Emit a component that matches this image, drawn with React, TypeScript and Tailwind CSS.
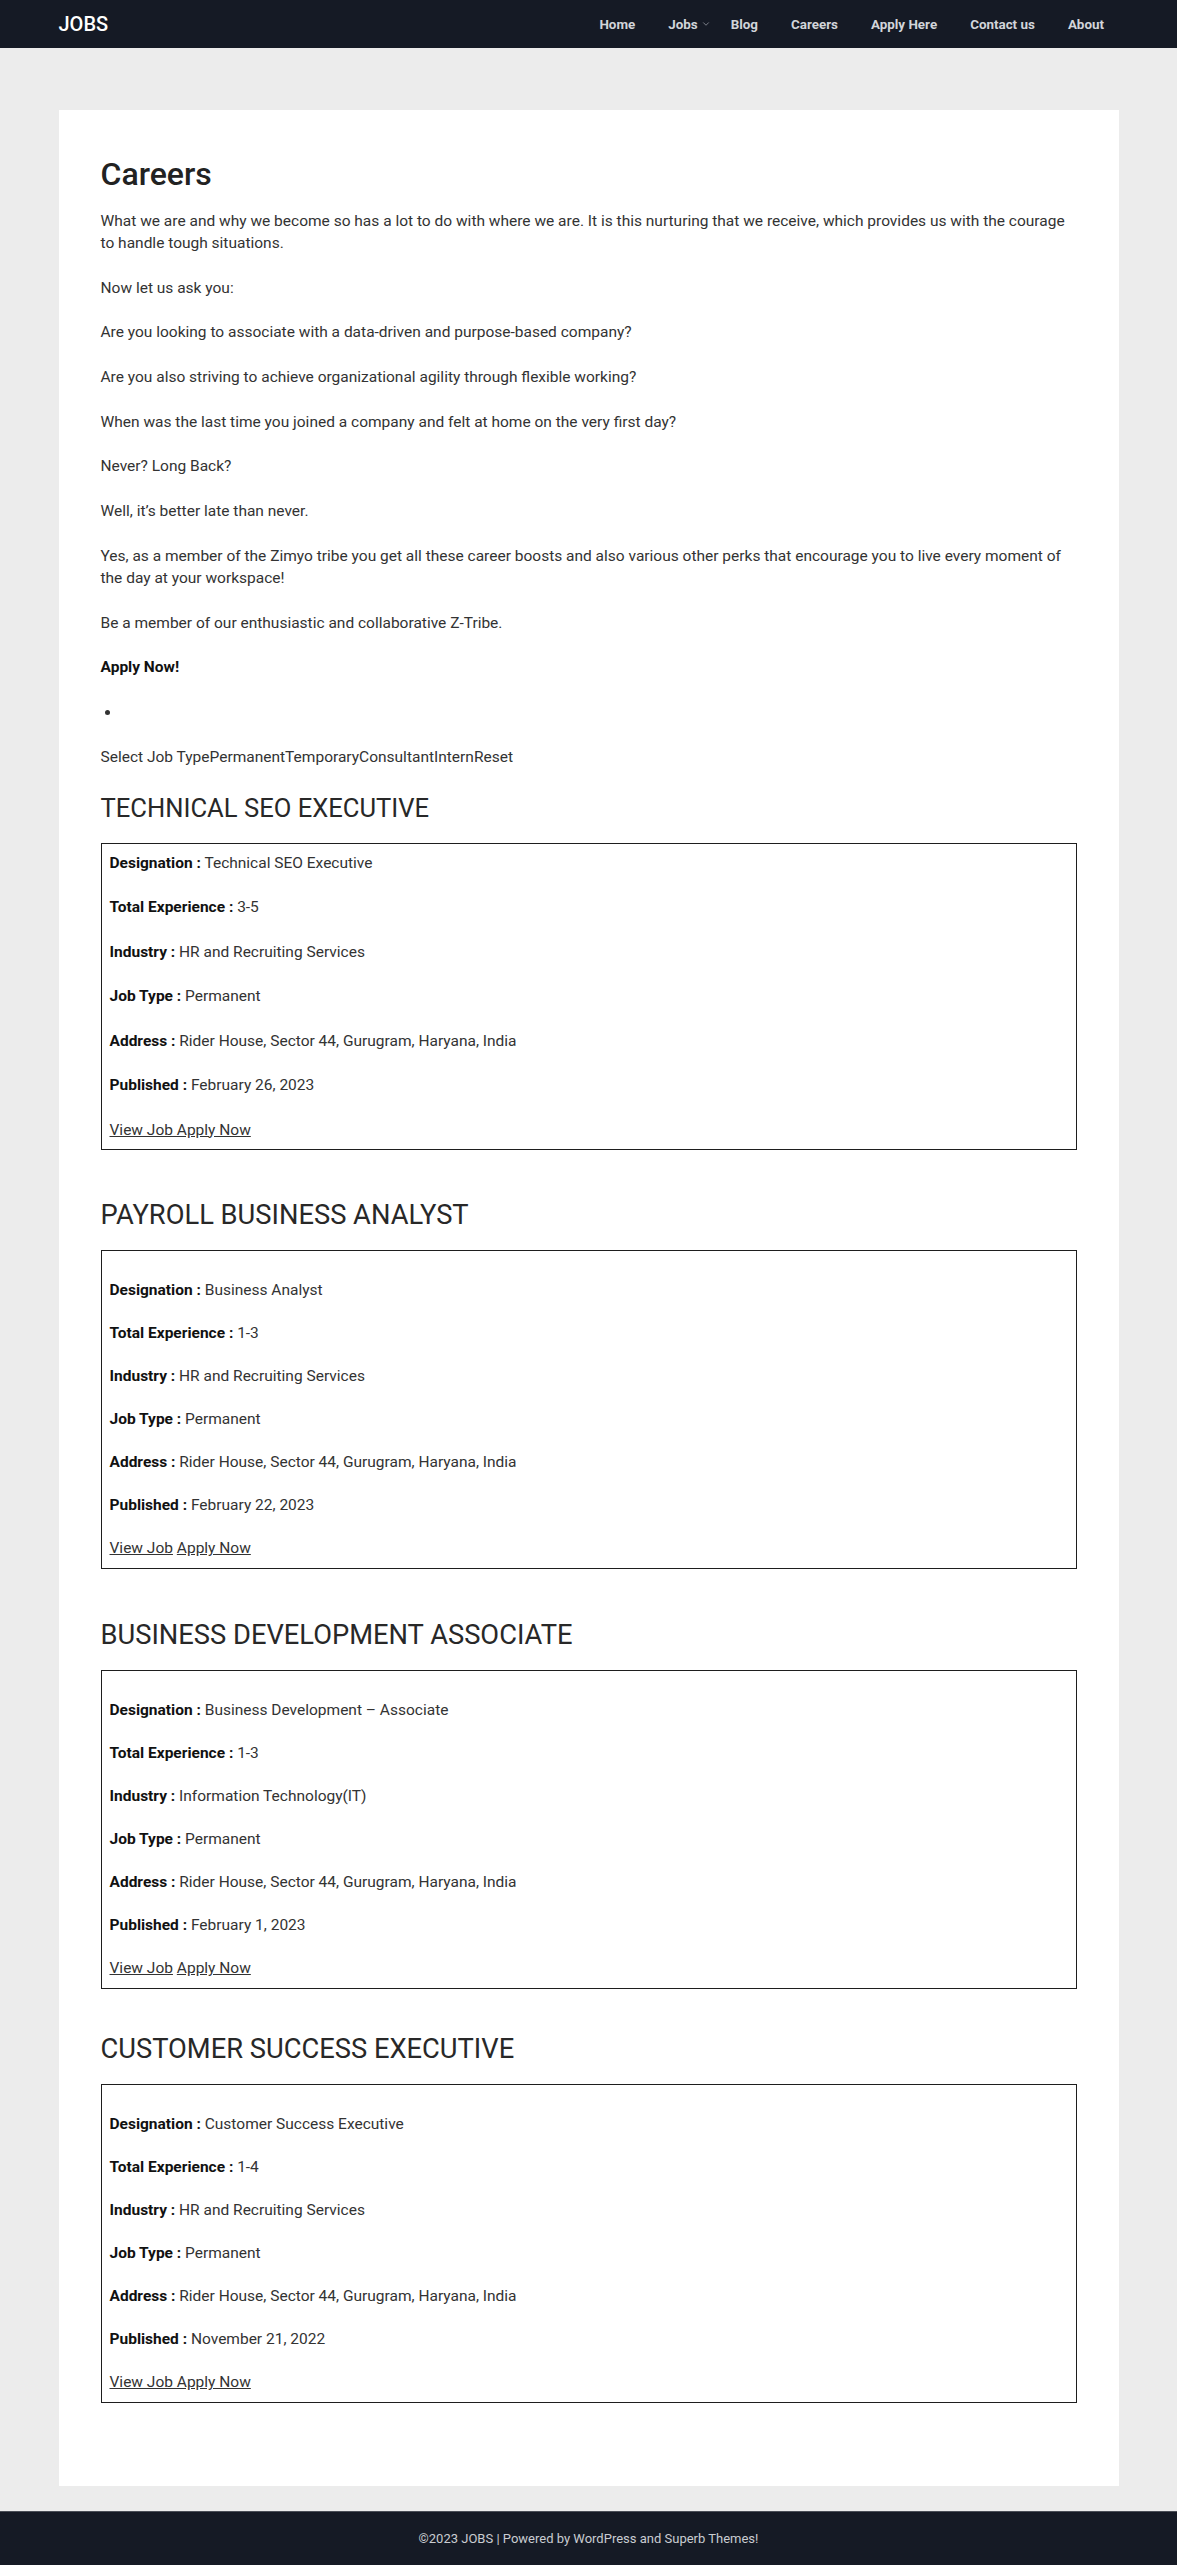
import { ChevronDown } from "lucide-react";

interface Job {
  title: string;
  designation: string;
  experience: string;
  industry: string;
  jobType: string;
  address: string;
  published: string;
  spacedTop: boolean;
  joinedLinks: boolean;
  gapBefore: string;
  titleSize: string;
}

const jobs: Job[] = [
  {
    title: "TECHNICAL SEO EXECUTIVE",
    designation: "Technical SEO Executive",
    experience: "3-5",
    industry: "HR and Recruiting Services",
    jobType: "Permanent",
    address: "Rider House, Sector 44, Gurugram, Haryana, India",
    published: "February 26, 2023",
    spacedTop: false,
    joinedLinks: true,
    gapBefore: "mt-[25px]",
    titleSize: "text-[25.6px]",
  },
  {
    title: "PAYROLL BUSINESS ANALYST",
    designation: "Business Analyst",
    experience: "1-3",
    industry: "HR and Recruiting Services",
    jobType: "Permanent",
    address: "Rider House, Sector 44, Gurugram, Haryana, India",
    published: "February 22, 2023",
    spacedTop: true,
    joinedLinks: false,
    gapBefore: "mt-[50px]",
    titleSize: "text-[27.3px]",
  },
  {
    title: "BUSINESS DEVELOPMENT ASSOCIATE",
    designation: "Business Development – Associate",
    experience: "1-3",
    industry: "Information Technology(IT)",
    jobType: "Permanent",
    address: "Rider House, Sector 44, Gurugram, Haryana, India",
    published: "February 1, 2023",
    spacedTop: true,
    joinedLinks: false,
    gapBefore: "mt-[51px]",
    titleSize: "text-[27.3px]",
  },
  {
    title: "CUSTOMER SUCCESS EXECUTIVE",
    designation: "Customer Success Executive",
    experience: "1-4",
    industry: "HR and Recruiting Services",
    jobType: "Permanent",
    address: "Rider House, Sector 44, Gurugram, Haryana, India",
    published: "November 21, 2022",
    spacedTop: true,
    joinedLinks: true,
    gapBefore: "mt-[45px]",
    titleSize: "text-[27.3px]",
  },
];

const navItems = ["Home", "Jobs", "Blog", "Careers", "Apply Here", "Contact us", "About"];

const intro = [
  "What we are and why we become so has a lot to do with where we are. It is this nurturing that we receive, which provides us with the courage to handle tough situations.",
  "Now let us ask you:",
  "Are you looking to associate with a data-driven and purpose-based company?",
  "Are you also striving to achieve organizational agility through flexible working?",
  "When was the last time you joined a company and felt at home on the very first day?",
  "Never? Long Back?",
  "Well, it’s better late than never.",
  "Yes, as a member of the Zimyo tribe you get all these career boosts and also various other perks that encourage you to live every moment of the day at your workspace!",
  "Be a member of our enthusiastic and collaborative Z-Tribe.",
];

function Row({ label, value }: { label: string; value: string }) {
  return (
    <div>
      <strong className="font-bold text-[#111]">{label} :</strong> {value}
    </div>
  );
}

function JobCard({ job }: { job: Job }) {
  const rows = [
    ["Designation", job.designation],
    ["Total Experience", job.experience],
    ["Industry", job.industry],
    ["Job Type", job.jobType],
    ["Address", job.address],
    ["Published", job.published],
  ];

  const body = job.spacedTop
    ? "flex flex-col gap-[21.5px] pt-[21.5px] leading-[21.5px]"
    : "flex flex-col gap-[22.5px] leading-[22px]";

  return (
    <section className={job.gapBefore}>
      <h2 className={`mb-[19px] leading-[31px] font-normal text-[#282828] ${job.titleSize}`}>{job.title}</h2>
      <div className="border border-[#1e1e1e] p-[8px]">
        <div className={body}>
          {rows.map(([l, v]) => (
            <Row key={l} label={l} value={v} />
          ))}
          <div>
            {job.joinedLinks ? (
              <a href="#" className="underline">
                View Job Apply Now
              </a>
            ) : (
              <>
                <a href="#" className="underline">
                  View Job
                </a>{" "}
                <a href="#" className="underline">
                  Apply Now
                </a>
              </>
            )}
          </div>
        </div>
      </div>
    </section>
  );
}

export default function App() {
  return (
    <div className="min-h-screen bg-[#ececec] font-['Roboto',sans-serif]">
      <header className="h-[48px] bg-[#151a25]">
        <div className="mx-auto flex h-full w-[1060px] items-center justify-between">
          <a href="#" className="text-[20px] font-medium text-white">
            JOBS
          </a>
          <nav>
            <ul className="-mr-[2px] flex">
              {navItems.map((item) => (
                <li key={item} className="relative px-[16.5px]">
                  <a href="#" className="text-[13.4px] font-bold text-[#d2d5da]">
                    {item}
                  </a>
                  {item === "Jobs" && (
                    <ChevronDown
                      size={10}
                      strokeWidth={1.5}
                      className="absolute top-1/2 right-[3px] -translate-y-1/2 text-[#b8bcc4]"
                    />
                  )}
                </li>
              ))}
            </ul>
          </nav>
        </div>
      </header>

      <main className="pt-[62px] pb-[25px]">
        <article className="mx-auto w-[1060px] bg-white px-[42px] pt-[46px] pb-[83px] text-[15.5px] leading-[22px] text-[#333]">
          <h1 className="mb-[18px] text-[32px] leading-[36px] font-medium text-[#222]">Careers</h1>
          <div className="flex flex-col gap-[22.7px]">
            {intro.map((p, i) => (
              <p key={i}>{p}</p>
            ))}
            <p className="font-bold text-[#111]">Apply Now!</p>
            <ul className="list-disc pl-[20px]">
              <li className="h-[22px]"></li>
            </ul>
            <p>Select Job TypePermanentTemporaryConsultantInternReset</p>
          </div>

          {jobs.map((job) => (
            <JobCard key={job.title} job={job} />
          ))}
        </article>
      </main>

      <footer className="flex h-[55px] items-center justify-center border-t border-[#4a4e57] bg-[#151a25]">
        <p className="text-[13px] text-[#c9ccd1]">©2023 JOBS | Powered by WordPress and Superb Themes!</p>
      </footer>
    </div>
  );
}
